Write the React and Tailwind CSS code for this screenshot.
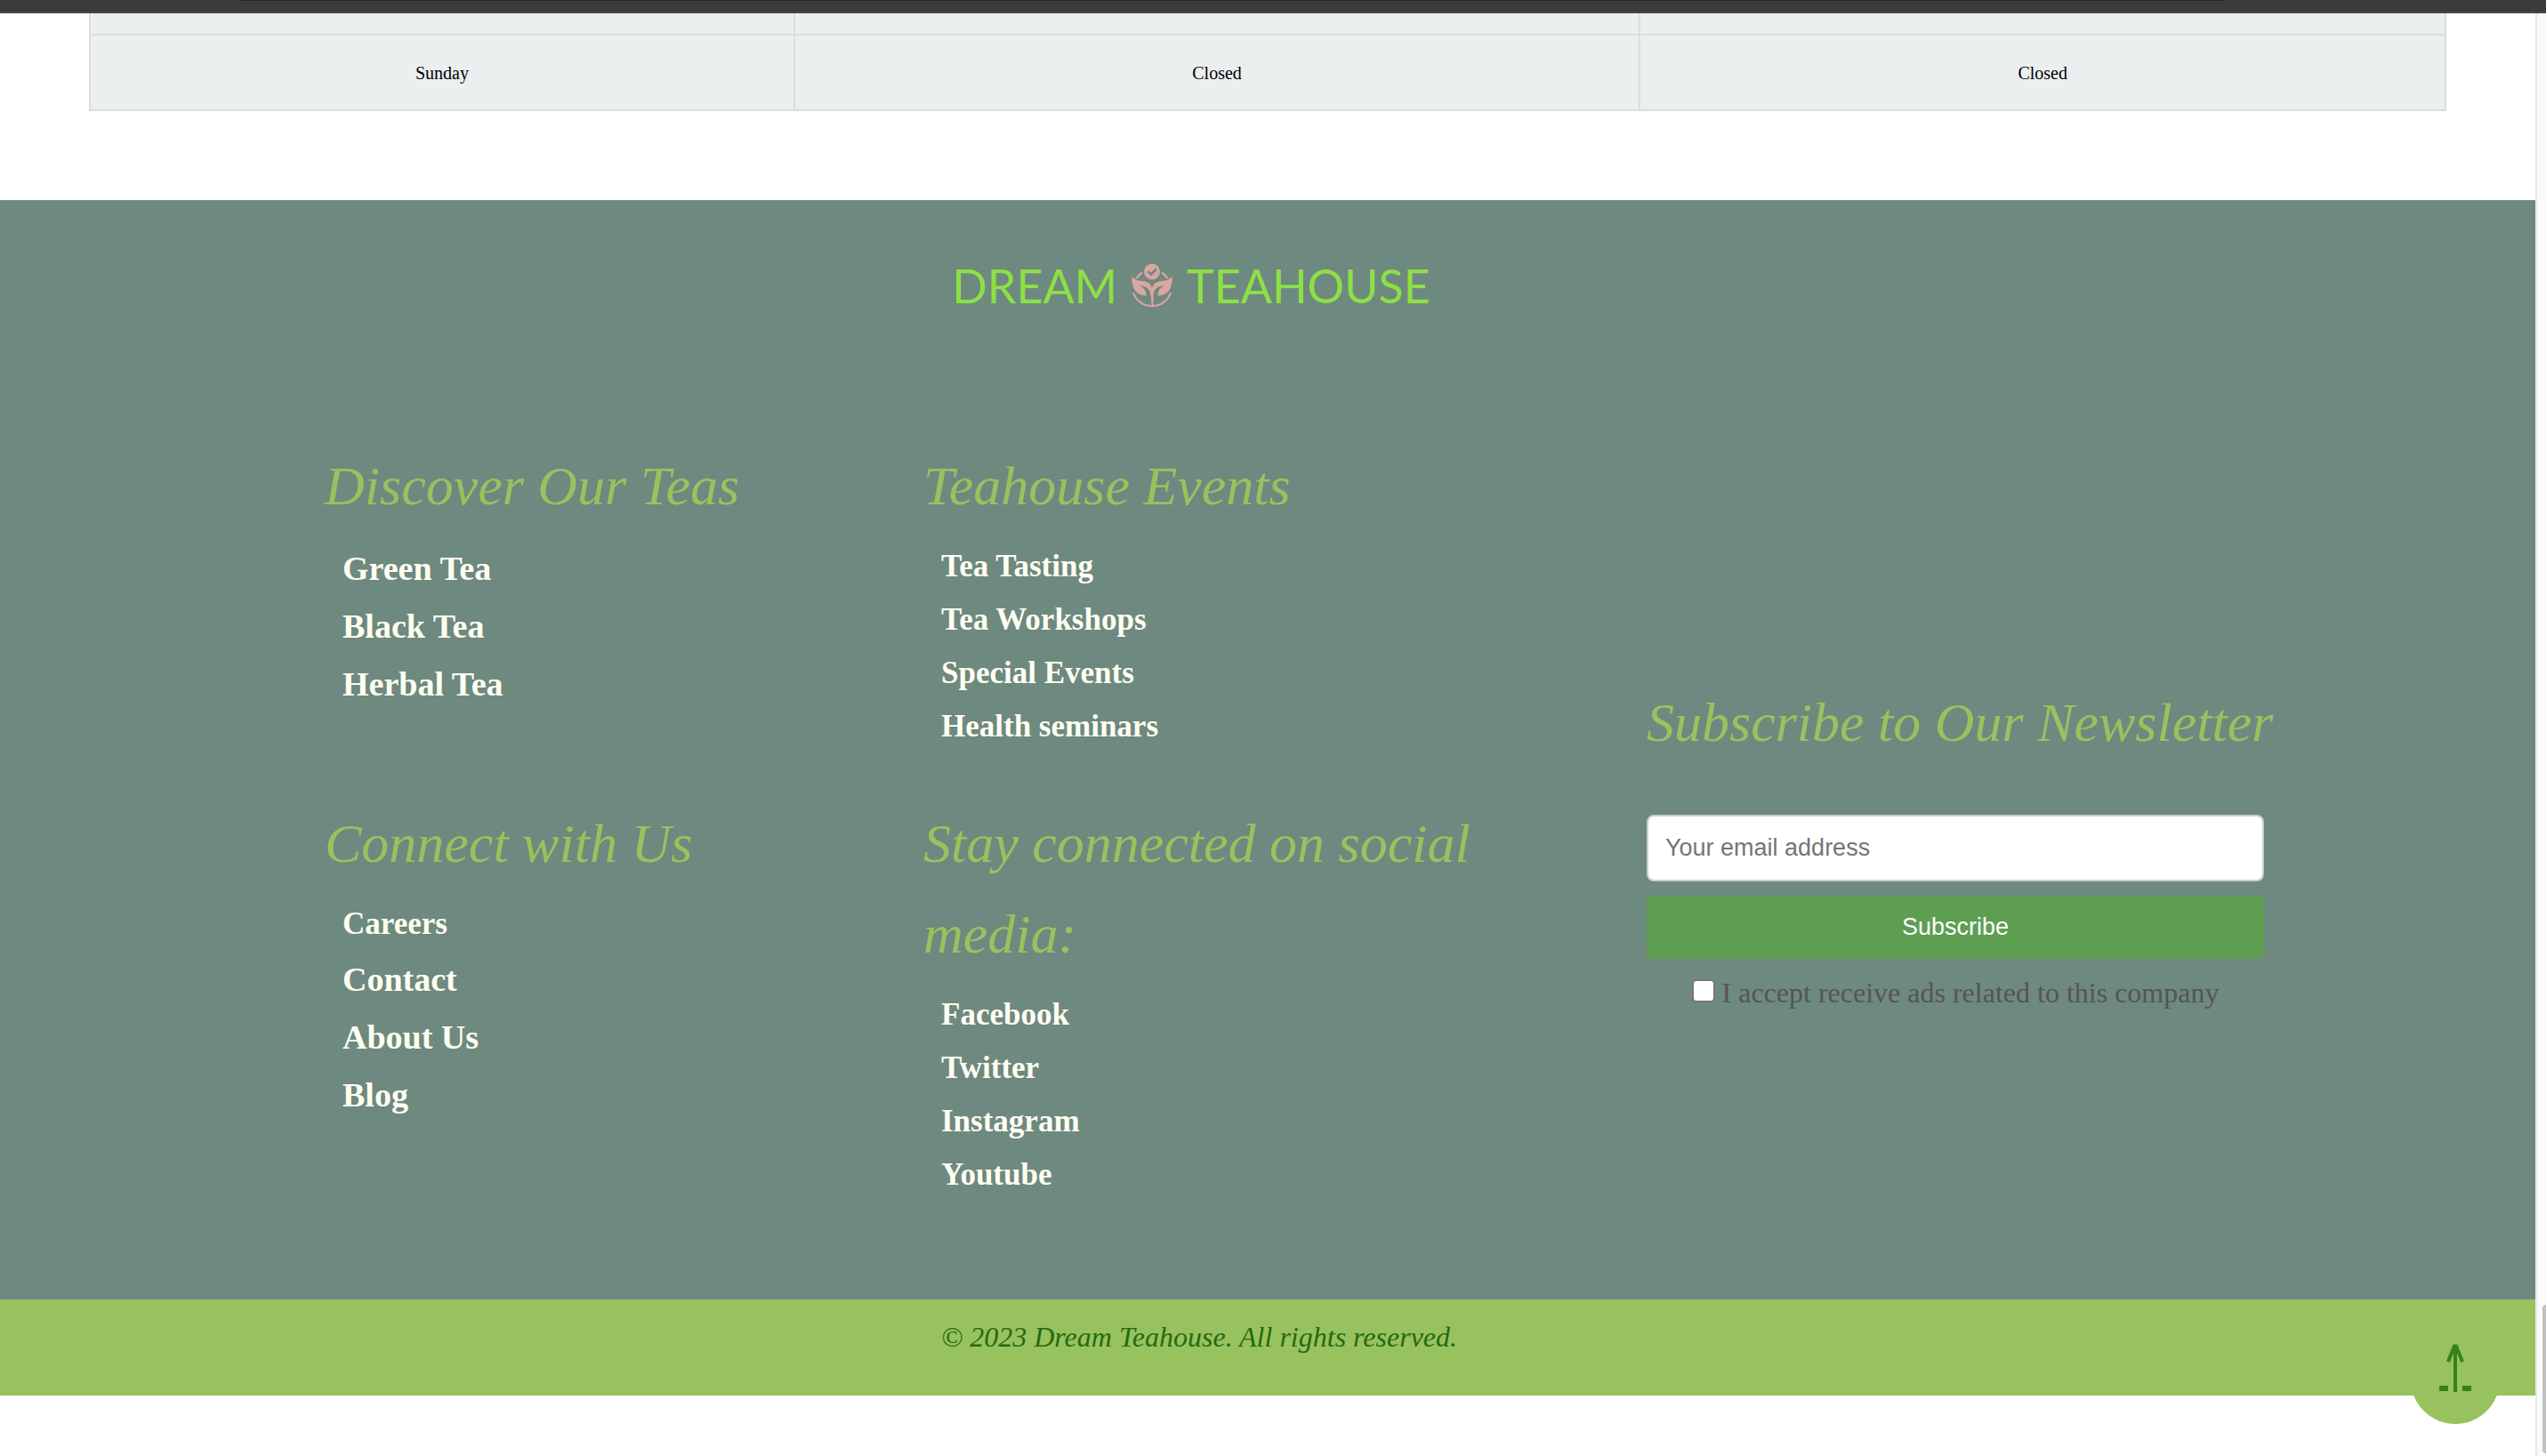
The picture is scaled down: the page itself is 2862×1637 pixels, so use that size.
const script = "font-['Apple_Chancery','Liberation_Serif',serif] italic";

function Heading({ children }) {
  return (
    <h2 className={`${script} text-[62px] leading-[102px] font-normal text-[#98c25e]`}>{children}</h2>
  );
}

function LinkGroup({ title, links, large = [] }) {
  return (
    <nav className="max-w-[680px]">
      <Heading>{title}</Heading>
      <ul className="mt-2.5 ml-5 font-bold text-[#fffff0]">
        {links.map((label) => (
          <li
            key={label}
            className={large.includes(label) ? "text-[38px] leading-[65px]" : "text-[35px] leading-[60px]"}
          >
            <a href="#">{label}</a>
          </li>
        ))}
      </ul>
    </nav>
  );
}

function LotusIcon() {
  return (
    <svg viewBox="0 0 46 50" className="h-[50px] w-[46px]" fill="none" stroke="#dca5a1" strokeWidth="2.2">
      <circle cx="23" cy="9.5" r="9" fill="#dca5a1" stroke="none" />
      <path d="M18.5 9l3.5 3.5 6-6" stroke="#6e8980" strokeWidth="2.6" />
      <path d="M5.500 17Q8 13 12 10.500M34 10.500Q38 13 40.500 17" />
      <path d="M2 33C5 42 13 48 23 48S41 42 44 33" />
      <path
        d="M.5 14.500C4 20 10 19.500 15 20.500C20 21.500 23 25 23 29C23 25 26 21.500 31 20.500C36 19.500 42 20 45.500 14.500C46.500 26 42.500 36 29.500 36.500C29.500 31 32 27 38 25C30 25 25.500 29 24.500 34V49H22.500C22.500 42 22 36 20.500 32C18.500 27 14 25 8 25C14 27 16.500 31 16.500 36.500C4 36-.5 26 .5 14.500Z"
        fill="#dca5a1"
        stroke="none"
      />
    </svg>
  );
}

function Logo() {
  return (
    <div className="flex items-center justify-center gap-4 font-['Lato',sans-serif] text-[52px] leading-[60px] text-[#8ce045]">
      <span>DREAM</span>
      <LotusIcon />
      <span>TEAHOUSE</span>
    </div>
  );
}

function HoursTable() {
  const cell = "border-2 border-[#dddddd] text-center";
  return (
    <table className="w-full table-fixed border-collapse bg-[#ebeff0] text-[20px] leading-[30px] text-black">
      <colgroup>
        <col className="w-[29.900%]" />
        <col className="w-[35.900%]" />
        <col />
      </colgroup>
      <tbody>
        <tr className="h-[24px]">
          <td className={`${cell} border-t-0`} />
          <td className={`${cell} border-t-0`} />
          <td className={`${cell} border-t-0`} />
        </tr>
        <tr className="h-[85px]">
          <td className={cell}>Sunday</td>
          <td className={cell}>Closed</td>
          <td className={cell}>Closed</td>
        </tr>
      </tbody>
    </table>
  );
}

function Newsletter() {
  return (
    <form className="row-span-2 pt-[266px]" onSubmit={(e) => e.preventDefault()}>
      <div className="w-[694px]">
        <Heading>
          <span className="whitespace-nowrap">Subscribe to Our Newsletter</span>
        </Heading>
        <input
          type="email"
          aria-label="Your email address"
          placeholder="Your email address"
          className="mt-[53px] block h-[75px] w-full rounded-lg border-2 border-[#cccccc] bg-white px-[19px] font-['Liberation_Sans',sans-serif] text-[27px] placeholder:text-[#757575]"
        />
        <button
          type="submit"
          className="mt-4 block h-[71px] w-full rounded-lg bg-[#5d9e51] font-['Liberation_Sans',sans-serif] text-[27px] text-white"
        >
          Subscribe
        </button>
        <label className="mt-4 flex items-start justify-center gap-2 text-[32px] leading-[44px] text-[#555555]">
          <input
            type="checkbox"
            className="mt-[7px] size-[26px] appearance-none rounded-[5px] border-2 border-[#767676] bg-white"
          />
          I accept receive ads related to this company
        </label>
      </div>
    </form>
  );
}

export default function App() {
  return (
    <div className="flex min-h-screen flex-col bg-white font-['Liberation_Serif',serif]">
      <div className="h-[15px] border-b-2 border-[#474747] bg-[#3b3b3b]">
        <div className="ml-[9.400%] h-px w-[78%] bg-[#262626]" />
      </div>
      <div className="flex flex-1">
        <div className="min-w-0 flex-1">
          <main className="px-[100px] pb-[100px]">
            <HoursTable />
          </main>
          <footer>
            <div className="bg-[#6e8980] pt-[66px] pb-[110px]">
              <div className="pr-[172px]">
                <Logo />
              </div>
              <div className="mt-36 grid grid-cols-[673fr_813fr_999fr] gap-y-[50px] pl-[365px]">
                <LinkGroup
                  title="Discover Our Teas"
                  links={["Green Tea", "Black Tea", "Herbal Tea"]}
                  large={["Green Tea", "Black Tea", "Herbal Tea"]}
                />
                <LinkGroup
                  title="Teahouse Events"
                  links={["Tea Tasting", "Tea Workshops", "Special Events", "Health seminars"]}
                />
                <Newsletter />
                <LinkGroup
                  title="Connect with Us"
                  links={["Careers", "Contact", "About Us", "Blog"]}
                  large={["Contact", "About Us", "Blog"]}
                />
                <LinkGroup
                  title="Stay connected on social media:"
                  links={["Facebook", "Twitter", "Instagram", "Youtube"]}
                />
              </div>
            </div>
            <div className="h-[108px] bg-[#98c25e] pt-5 pr-[154px]">
              <p className={`${script} text-center text-[32px] leading-[44px] text-[#256a12]`}>
                © 2023 Dream Teahouse. All rights reserved.
              </p>
            </div>
          </footer>
        </div>
        <div className="flex w-3 flex-col justify-end border-l-2 border-[#e8e8e8] bg-[#fafafa] pb-[3px] pl-1.5">
          <div className="h-[167px] rounded-l-lg bg-[#c1c1c1]" />
        </div>
      </div>
      <button
        type="button"
        aria-label="Back to top"
        className="fixed right-[52px] bottom-9 size-[100px] rounded-full bg-[#98c25e]"
      >
        <svg viewBox="0 0 100 100" className="size-full" fill="none" stroke="#37801f" strokeWidth="4">
          <path d="M50 12V64M42 30L49 12.500H51L58 30" />
          <path d="M32 60H42M58 60H68" strokeWidth="6" />
        </svg>
      </button>
    </div>
  );
}
